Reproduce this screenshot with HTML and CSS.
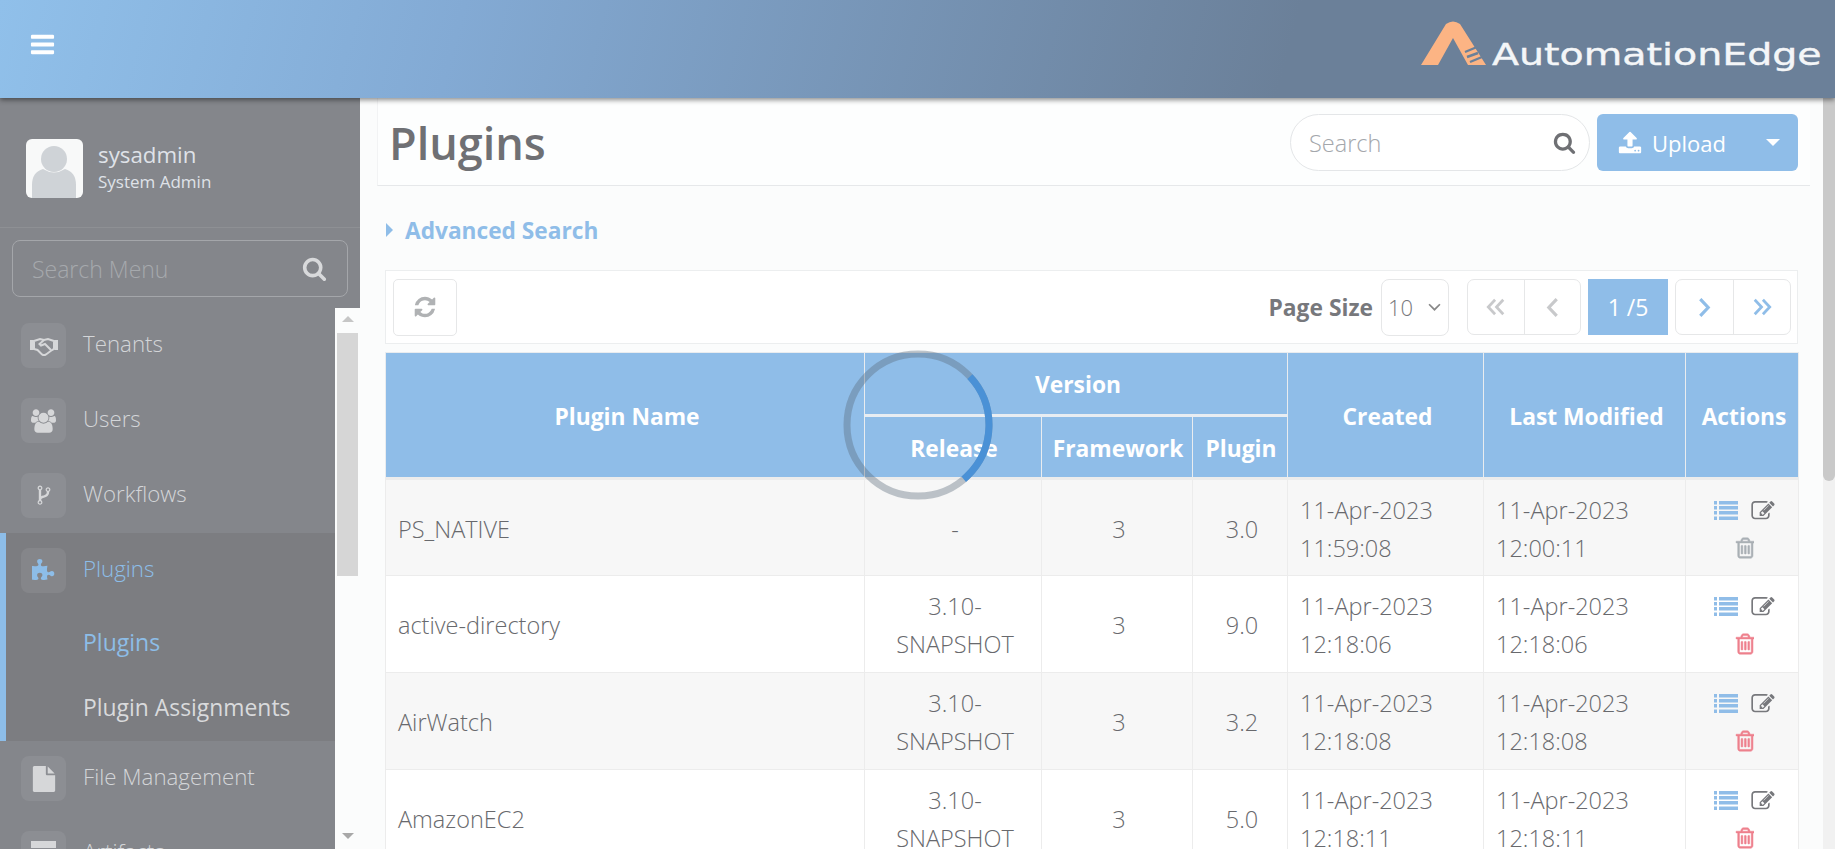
FILE: index.html
```html
<!DOCTYPE html>
<html lang="en">
<head>
    <meta charset="UTF-8">
    <meta name="viewport" content="width=device-width, initial-scale=1.0">
    <title>Plugins</title>
    <link rel="stylesheet" href="styles.css">
</head>
<body>
    <svg class="sprite" xmlns="http://www.w3.org/2000/svg">
        <symbol id="i-bars" viewBox="0 0 1792 1792"><path d="M1664 1344v128q0 26-19 45t-45 19h-1408q-26 0-45-19t-19-45v-128q0-26 19-45t45-19h1408q26 0 45 19t19 45zm0-512v128q0 26-19 45t-45 19h-1408q-26 0-45-19t-19-45v-128q0-26 19-45t45-19h1408q26 0 45 19t19 45zm0-512v128q0 26-19 45t-45 19h-1408q-26 0-45-19t-19-45v-128q0-26 19-45t45-19h1408q26 0 45 19t19 45z"/></symbol>
        <symbol id="i-search" viewBox="0 0 1792 1792"><path d="M1216 832q0-185-131.500-316.500t-316.500-131.500-316.500 131.500-131.500 316.500 131.500 316.500 316.500 131.500 316.500-131.500 131.500-316.500zm512 832q0 52-38 90t-90 38q-54 0-90-38l-343-342q-179 124-399 124-143 0-273.500-55.500t-225-150-150-225-55.500-273.500 55.500-273.500 150-225 225-150 273.500-55.500 273.500 55.500 225 150 150 225 55.500 273.500q0 220-124 399l343 343q37 37 37 90z"/></symbol>
        <symbol id="i-upload" viewBox="0 0 1792 1792"><path d="M1344 1472q0-26-19-45t-45-19-45 19-19 45 19 45 45 19 45-19 19-45zm256 0q0-26-19-45t-45-19-45 19-19 45 19 45 45 19 45-19 19-45zm128-224v320q0 40-28 68t-68 28h-1472q-40 0-68-28t-28-68v-320q0-40 28-68t68-28h427q21 56 70.500 92t110.500 36h256q61 0 110.500-36t70.500-92h427q40 0 68 28t28 68zm-325-648q-17 40-59 40h-256v448q0 26-19 45t-45 19h-256q-26 0-45-19t-19-45v-448h-256q-42 0-59-40-17-39 14-69l448-448q18-19 45-19t45 19l448 448q31 30 14 69z"/></symbol>
        <symbol id="i-refresh" viewBox="0 0 1792 1792"><path d="M1639 1056q0 5-1 7-64 268-268 434.500t-478 166.500q-146 0-282.500-55t-243.500-157l-129 129q-19 19-45 19t-45-19-19-45v-448q0-26 19-45t45-19h448q26 0 45 19t19 45-19 45l-137 137q71 66 161 102t187 36q134 0 250-65t186-179q11-17 53-117 8-23 30-23h192q13 0 22.500 9.500t9.500 22.500zm25-800v448q0 26-19 45t-45 19h-448q-26 0-45-19t-19-45 19-45l138-138q-148-137-349-137-134 0-250 65t-186 179q-11 17-53 117-8 23-30 23h-199q-13 0-22.500-9.500t-9.500-22.500v-7q65-268 270-434.500t480-166.500q146 0 284 55.500t245 156.500l130-129q19-19 45-19t45 19 19 45z"/></symbol>
        <symbol id="i-users" viewBox="0 0 1920 1792"><path d="M593 896q-162 5-265 128h-134q-82 0-138-40.500t-56-118.500q0-353 124-353 6 0 43.500 21t97.500 42.500 119 21.500q67 0 133-23-5 37-5 66 0 139 81 256zm1071 637q0 120-73 189.500t-194 69.500h-874q-121 0-194-69.500t-73-189.500q0-53 3.500-103.500t14-109 26.500-108.500 43-97.500 62-81 85.500-53.500 111.500-20q10 0 43 21.500t73 48 107 48 135 21.500 135-21.500 107-48 73-48 43-21.500q61 0 111.500 20t85.500 53.500 62 81 43 97.500 26.500 108.500 14 109 3.500 103.500zm-1024-1277q0 106-75 181t-181 75-181-75-75-181 75-181 181-75 181 75 75 181zm704 384q0 159-112.500 271.500t-271.500 112.500-271.500-112.500-112.500-271.500 112.500-271.500 271.500-112.500 271.500 112.500 112.500 271.500zm576 225q0 78-56 118.500t-138 40.500h-134q-103-123-265-128 81-117 81-256 0-29-5-66 66 23 133 23 59 0 119-21.500t97.500-42.500 43.500-21q124 0 124 353zm-128-609q0 106-75 181t-181 75-181-75-75-181 75-181 181-75 181 75 75 181z"/></symbol>
        <symbol id="i-puzzle" viewBox="0 0 1792 1792"><path d="M1664 1098q0 81-44.500 135t-123.500 54q-41 0-77.500-17.500t-59-38-56.500-38-71-17.500q-110 0-110 124 0 39 16 115t15 115v5q-22 0-33 1-34 3-97.500 11.500t-115.500 13.500-98 5q-61 0-103-26.500t-42-83.500q0-37 17.500-71t38-56.500 38-59 17.500-77.500q0-79-54-123.500t-135-44.500q-84 0-143 45.500t-59 127.500q0 43 15 83t33.500 64.500 33.500 53 15 50.500q0 45-46 89-37 35-117 35-95 0-245-24-9-2-27.500-4t-27.500-4l-13-2q-1 0-3-1-2 0-2-1v-1024q2 1 17.500 3.500t34 5 21.500 3.500q150 24 245 24 80 0 117-35 46-44 46-89 0-22-15-50.500t-33.500-53-33.500-64.500-15-83q0-82 59-127.500t144-45.500q80 0 134 44.500t54 123.500q0 41-17.500 77.500t-38 59-38 56.500-17.500 71q0 57 42 83.500t103 26.500q64 0 180-15t163-17v2q-1 2-3.500 17.500t-5 34-3.500 21.500q-24 150-24 245 0 80 35 117 44 46 89 46 22 0 50.500-15t53-33.500 64.500-33.500 83-15q82 0 127.500 59t45.500 143z"/></symbol>
        <symbol id="i-file" viewBox="0 0 1792 1792"><path d="M1152 512v-472q22 14 36 28l408 408q14 14 28 36h-472zm-128 32q0 40 28 68t68 28h544v1056q0 40-28 68t-68 28h-1344q-40 0-68-28t-28-68v-1600q0-40 28-68t68-28h800v544z"/></symbol>
        <symbol id="i-fork" viewBox="0 0 1280 1792"><path d="M416 1408q0-40-28-68t-68-28-68 28-28 68 28 68 68 28 68-28 28-68zm0-1152q0-40-28-68t-68-28-68 28-28 68 28 68 68 28 68-28 28-68zm640 128q0-40-28-68t-68-28-68 28-28 68 28 68 68 28 68-28 28-68zm96 0q0 52-26 96.500t-70 69.500q-2 287-226 414-67 38-203 81-128 40-169.500 71t-41.500 100v26q44 25 70 69.500t26 96.500q0 80-56 136t-136 56-136-56-56-136q0-52 26-96.500t70-69.500v-820q-44-25-70-69.500t-26-96.500q0-80 56-136t136-56 136 56 56 136q0 52-26 96.500t-70 69.500v497q54-26 154-57 55-17 87.500-29.500t70.500-31 59-39.500 40.500-51 28-69.500 8.500-91.500q-44-25-70-69.500t-26-96.500q0-80 56-136t136-56 136 56 56 136z"/></symbol>
        <symbol id="i-handshake" viewBox="0 0 28 20"><path d="M0 4h3.500v10H0zM24.500 4H28v10h-3.500z"/><path d="M4 5l6-2 4 1 4-1 6 2v8l-2 1-6 4.500-2 1-2-1-4.500-4.500L4 13z" fill="none" stroke="currentColor" stroke-width="2"/><path d="M14 4l-4.500 4 1.500 1.500L15 8l6 6" fill="none" stroke="currentColor" stroke-width="2"/></symbol>
        <symbol id="i-list" viewBox="0 0 24 19"><path d="M0 0h3v3.500H0zM5 0h19v3.500H5zM0 5h3v3.500H0zM5 5h19v3.500H5zM0 10h3v3.500H0zM5 10h19v3.500H5zM0 15.500h3V19H0zM5 15.500h19V19H5z"/></symbol>
        <symbol id="i-edit" viewBox="0 0 1792 1536"><path transform="translate(0 -128)" d="M888 1184l116-116-152-152-116 116v56h96v96h56zm440-720q-16-16-33 1l-350 350q-17 17-1 33t33-1l350-350q17-17 1-33zm80 594v190q0 119-84.500 203.500t-203.500 84.500h-832q-119 0-203.500-84.500t-84.500-203.500v-832q0-119 84.500-203.500t203.500-84.500h832q63 0 117 25 15 7 18 23 3 17-9 29l-49 49q-14 14-32 8-23-6-45-6h-832q-66 0-113 47t-47 113v832q0 66 47 113t113 47h832q66 0 113-47t47-113v-126q0-13 9-22l64-64q15-15 35-7t20 29zm-96-738l288 288-672 672h-288v-288zm444 132l-92 92-288-288 92-92q28-28 68-28t68 28l152 152q28 28 28 68t-28 68z"/></symbol>
        <symbol id="i-trash" viewBox="128 64 1408 1664"><path d="M704 736v576q0 14-9 23t-23 9h-64q-14 0-23-9t-9-23v-576q0-14 9-23t23-9h64q14 0 23 9t9 23zm256 0v576q0 14-9 23t-23 9h-64q-14 0-23-9t-9-23v-576q0-14 9-23t23-9h64q14 0 23 9t9 23zm256 0v576q0 14-9 23t-23 9h-64q-14 0-23-9t-9-23v-576q0-14 9-23t23-9h64q14 0 23 9t9 23zm128 724v-948h-896v948q0 22 7 40.500t14.500 27 10.500 8.500h832q3 0 10.500-8.500t14.500-27 7-40.500zm-672-1076h448l-48-117q-7-9-17-11h-317q-10 2-17 11zm928 32v64q0 14-9 23t-23 9h-96v948q0 83-47 143.500t-113 60.500h-832q-66 0-113-58.500t-47-141.500v-952h-96q-14 0-23-9t-9-23v-64q0-14 9-23t23-9h309l70-167q15-37 54-63t79-26h320q40 0 79 26t54 63l70 167h309q14 0 23 9t9 23z"/></symbol>
        <symbol id="i-dleft" viewBox="0 0 22 18"><path d="M10 1L2.500 9l7.500 8M19 1l-7.500 8 7.500 8" fill="none" stroke="currentColor" stroke-width="3"/></symbol>
        <symbol id="i-left" viewBox="0 0 12 18"><path d="M10 1L2.500 9l7.500 8" fill="none" stroke="currentColor" stroke-width="3"/></symbol>
        <symbol id="i-right" viewBox="0 0 12 18"><path d="M2 1l7.500 8L2 17" fill="none" stroke="currentColor" stroke-width="3"/></symbol>
        <symbol id="i-dright" viewBox="0 0 22 18"><path d="M3 1l7.500 8L3 17M12 1l7.500 8-7.500 8" fill="none" stroke="currentColor" stroke-width="3"/></symbol>
    </svg>

    <header class="topbar">
        <svg class="menu-icon"><use href="#i-bars"/></svg>
        <div class="logo">
            <svg class="logo-mark" viewBox="0 0 65 46">
                <path d="M0 45L25 4Q32 -1 39 4L65 45H47L32 18L17 45Z" fill="#fcb484"/>
                <path d="M44 32L56 27M46 37L57 33M49 42L61 37" fill="none" stroke="#6b8099" stroke-width="2.400"/>
            </svg>
            <span class="logo-text">AutomationEdge</span>
        </div>
    </header>

    <div class="layout">
        <aside class="sidebar">
            <div class="user-panel">
                <div class="avatar">
                    <svg viewBox="0 0 57 59">
                        <circle cx="28" cy="20" r="13" fill="#cfd3d7"/>
                        <path d="M6 59V46Q6 33 17 30Q28 37 39 30Q50 33 50 46V59Z" fill="#cfd3d7"/>
                    </svg>
                </div>
                <div>
                    <div class="user-name">sysadmin</div>
                    <div class="user-role">System Admin</div>
                </div>
            </div>
            <div class="menu-search">
                <span>Search Menu</span>
                <svg class="menu-search-icon"><use href="#i-search"/></svg>
            </div>
            <div class="nav-wrap">
                <nav class="nav">
                    <a class="nav-item"><span class="nav-icon"><svg class="ic-hand"><use href="#i-handshake"/></svg></span><span class="nav-label">Tenants</span></a>
                    <a class="nav-item"><span class="nav-icon"><svg class="ic-users"><use href="#i-users"/></svg></span><span class="nav-label">Users</span></a>
                    <a class="nav-item"><span class="nav-icon"><svg class="ic-fork"><use href="#i-fork"/></svg></span><span class="nav-label">Workflows</span></a>
                    <div class="nav-group">
                        <a class="nav-item active"><span class="nav-icon"><svg class="ic-puzzle"><use href="#i-puzzle"/></svg></span><span class="nav-label">Plugins</span></a>
                        <a class="nav-sub current">Plugins</a>
                        <a class="nav-sub">Plugin Assignments</a>
                    </div>
                    <a class="nav-item"><span class="nav-icon"><svg class="ic-file"><use href="#i-file"/></svg></span><span class="nav-label">File Management</span></a>
                    <a class="nav-item"><span class="nav-icon"><span class="ic-archive"></span></span><span class="nav-label">Artifacts</span></a>
                </nav>
                <div class="nav-scroll">
                    <span class="arrow-up"></span>
                    <div class="nav-thumb"></div>
                    <span class="arrow-down"></span>
                </div>
            </div>
        </aside>

        <main class="content">
            <div class="page-head">
                <h1>Plugins</h1>
                <div class="head-tools">
                    <div class="search-box">
                        <span>Search</span>
                        <svg class="search-icon"><use href="#i-search"/></svg>
                    </div>
                    <button class="upload-btn">
                        <svg class="upload-icon"><use href="#i-upload"/></svg>
                        <span>Upload</span>
                        <i class="caret"></i>
                    </button>
                </div>
            </div>

            <div class="adv-search"><i class="caret-right"></i>Advanced Search</div>

            <div class="toolbar">
                <button class="refresh-btn"><svg><use href="#i-refresh"/></svg></button>
                <div class="pager">
                    <b class="size-label">Page Size</b>
                    <div class="size-select">10
                        <svg viewBox="0 0 12 8"><path d="M1 1l5 5 5-5" fill="none" stroke="#888" stroke-width="1.600"/></svg>
                    </div>
                    <div class="page-group">
                        <span class="page-btn off"><svg class="ic-double"><use href="#i-dleft"/></svg></span>
                        <span class="page-btn off"><svg class="ic-single"><use href="#i-left"/></svg></span>
                    </div>
                    <div class="page-now">1 /5</div>
                    <div class="page-group next">
                        <span class="page-btn"><svg class="ic-single"><use href="#i-right"/></svg></span>
                        <span class="page-btn"><svg class="ic-double"><use href="#i-dright"/></svg></span>
                    </div>
                </div>
            </div>

            <table class="grid">
                <colgroup>
                    <col class="c-name"><col class="c-release"><col class="c-frame"><col class="c-plugin">
                    <col class="c-created"><col class="c-modified"><col class="c-actions">
                </colgroup>
                <thead>
                    <tr>
                        <th rowspan="2">Plugin Name</th>
                        <th colspan="3" class="th-group">Version</th>
                        <th rowspan="2">Created</th>
                        <th rowspan="2">Last Modified</th>
                        <th rowspan="2">Actions</th>
                    </tr>
                    <tr class="th-sub">
                        <th>Release</th>
                        <th>Framework</th>
                        <th>Plugin</th>
                    </tr>
                </thead>
                <tbody>
                    <tr>
                        <td class="name">PS_NATIVE</td><td>-</td><td>3</td><td>3.0</td>
                        <td class="date">11-Apr-2023<br>11:59:08</td><td class="date">11-Apr-2023<br>12:00:11</td>
                        <td class="acts">
                            <svg class="a-list"><use href="#i-list"/></svg><svg class="a-edit"><use href="#i-edit"/></svg><br>
                            <svg class="a-trash off"><use href="#i-trash"/></svg>
                        </td>
                    </tr>
                    <tr>
                        <td class="name">active-directory</td><td>3.10-<br>SNAPSHOT</td><td>3</td><td>9.0</td>
                        <td class="date">11-Apr-2023<br>12:18:06</td><td class="date">11-Apr-2023<br>12:18:06</td>
                        <td class="acts">
                            <svg class="a-list"><use href="#i-list"/></svg><svg class="a-edit"><use href="#i-edit"/></svg><br>
                            <svg class="a-trash"><use href="#i-trash"/></svg>
                        </td>
                    </tr>
                    <tr>
                        <td class="name">AirWatch</td><td>3.10-<br>SNAPSHOT</td><td>3</td><td>3.2</td>
                        <td class="date">11-Apr-2023<br>12:18:08</td><td class="date">11-Apr-2023<br>12:18:08</td>
                        <td class="acts">
                            <svg class="a-list"><use href="#i-list"/></svg><svg class="a-edit"><use href="#i-edit"/></svg><br>
                            <svg class="a-trash"><use href="#i-trash"/></svg>
                        </td>
                    </tr>
                    <tr>
                        <td class="name">AmazonEC2</td><td>3.10-<br>SNAPSHOT</td><td>3</td><td>5.0</td>
                        <td class="date">11-Apr-2023<br>12:18:11</td><td class="date">11-Apr-2023<br>12:18:11</td>
                        <td class="acts">
                            <svg class="a-list"><use href="#i-list"/></svg><svg class="a-edit"><use href="#i-edit"/></svg><br>
                            <svg class="a-trash"><use href="#i-trash"/></svg>
                        </td>
                    </tr>
                </tbody>
            </table>
        </main>

        <div class="page-scroll"><div class="page-thumb"></div></div>
    </div>

    <svg class="spinner" viewBox="0 0 150 150">
        <circle cx="75" cy="75" r="71" fill="none" stroke="rgba(90,105,120,.38)" stroke-width="7"/>
        <circle cx="75" cy="75" r="71" fill="none" stroke="#4a91d6" stroke-width="7" stroke-dasharray="115 331" transform="rotate(-43 75 75)"/>
    </svg>
</body>
</html>
```

FILE: styles.css
```css
* { box-sizing: border-box; }
html, body { height: 100%; }
body { margin: 0; height: 849px; overflow: hidden; font-family: "Open Sans", "Noto Sans", sans-serif; color: #77787c; background: #fbfcfc; display: flex; flex-direction: column; }
.sprite { display: none; }
svg { fill: currentColor; }

/* top bar */
.topbar { height: 98px; flex: none; display: flex; align-items: center; justify-content: space-between; padding: 0 16px 10px 29px; background: linear-gradient(105deg, #90c0ea 0%, #83aad4 25%, #6b8099 70%, #6b8099 100%); box-shadow: 0 2px 5px rgba(0,0,0,.45); position: relative; z-index: 2; }
.menu-icon { width: 27px; height: 27px; color: #fff; }
.logo { display: flex; align-items: flex-end; gap: 6px; margin-top: -2px; }
.logo-mark { width: 65px; height: 46px; }
.logo-text { width: 327px; color: #f4f6f8; font-family: "DejaVu Sans", sans-serif; font-size: 31px; line-height: 32px; white-space: nowrap; -webkit-text-stroke: .4px #f4f6f8; transform-origin: left bottom; transform: scaleX(1.275); margin-bottom: -4px; }

.layout { flex: 1; display: flex; min-height: 0; }

/* sidebar */
.sidebar { width: 360px; flex: none; background: #84868b; display: flex; flex-direction: column; overflow: hidden; }
.user-panel { height: 130px; flex: none; display: flex; align-items: center; gap: 15px; padding: 11px 0 0 26px; margin-bottom: 12px; border-bottom: 1px solid #8e9094; }
.avatar { width: 57px; height: 59px; background: #f8f9f9; border-radius: 6px; overflow: hidden; }
.avatar svg { display: block; width: 57px; height: 59px; }
.user-name { color: #dfe2e8; font-size: 22.300px; line-height: 27px; }
.user-role { color: #dfe2e8; font-size: 17px; line-height: 27px; }
.menu-search { height: 57px; flex: none; margin: 0 12px; border: 1px solid #a4a6aa; border-radius: 8px; display: flex; align-items: center; justify-content: space-between; padding: 0 20px 0 19px; color: #a6a9ad; font-size: 23px; font-weight: 300; }
.menu-search-icon { width: 25px; height: 25px; color: #d8d9db; }
.nav-wrap { flex: 1; min-height: 0; display: flex; margin-top: 11px; }
.nav { width: 335px; flex: none; overflow: hidden; }
.nav-item { height: 75px; display: flex; align-items: center; gap: 17px; padding-left: 21px; color: #d3d5d8; font-size: 22.300px; font-weight: 300; }
.nav-label { margin-bottom: 4px; }
.nav-icon { width: 45px; height: 45px; flex: none; border-radius: 8px; background: #8c8e93; display: flex; align-items: center; justify-content: center; color: #d6d7d9; }
.nav-group { background: #7c7d81; box-shadow: inset 6px 0 0 #8dbde8; height: 208px; }
.nav-item.active { color: #8dbde8; }
.nav-item.active .nav-icon { color: #8dbde8; background: #85868a; }
.nav-sub { display: block; height: 66.500px; padding-left: 83px; color: #d9dadc; font-size: 22.900px; font-weight: 500; line-height: 66px; }
.nav-sub.current { color: #8dbde8; font-size: 23px; font-weight: 400; line-height: 68px; }
.ic-hand { width: 28px; height: 20px; }
.ic-users { width: 25px; height: 24px; }
.ic-fork { width: 16px; height: 24px; }
.ic-puzzle { width: 24px; height: 24px; }
.ic-file { width: 26px; height: 26px; }
.ic-archive { display: block; width: 25px; height: 26px; background: linear-gradient(#d6d7d9 0 7px, transparent 7px 9px, #d6d7d9 9px); }
.nav-scroll { width: 25px; flex: none; background: #fbfcfc; display: flex; flex-direction: column; align-items: center; justify-content: space-between; padding: 8px 0 10px; position: relative; }
.nav-thumb { position: absolute; top: 25px; left: 2px; width: 21px; height: 243px; background: #d6d6d6; }
.arrow-up { width: 0; height: 0; border: 6px solid transparent; border-top: 0; border-bottom: 6px solid #c6c6c6; }
.arrow-down { width: 0; height: 0; border: 6px solid transparent; border-bottom: 0; border-top: 6px solid #a8a8a8; }

/* main */
.content { flex: 1; min-width: 0; padding: 0 13px 0 17px; overflow: hidden; }
.page-head { height: 88px; display: flex; align-items: center; justify-content: space-between; padding: 2px 12px 0 11px; background: #fdfefe; border-bottom: 1px solid #e6e8ea; border-left: 1px solid #f2f3f4; }
h1 { margin: 0; font-size: 45px; font-weight: 600; color: #6f7074; }
.head-tools { display: flex; gap: 7px; align-items: center; }
.search-box { width: 300px; height: 57px; background: #fff; border: 1px solid #e4e6e8; border-radius: 29px; display: flex; align-items: center; justify-content: space-between; padding: 0 13px 0 18px; color: #a4a7ac; font-size: 23.500px; font-weight: 300; }
.search-icon { width: 23px; height: 23px; color: #6f7074; }
.upload-btn { width: 201px; height: 57px; background: #8fbde8; border: 0; border-radius: 6px; color: #fff; font: 400 22px "Open Sans", sans-serif; display: flex; align-items: center; padding: 0 18px 0 21px; }
.upload-icon { width: 24px; height: 24px; margin-right: 10px; }
.caret { margin-left: auto; width: 0; height: 0; border: 7px solid transparent; border-bottom: 0; border-top: 7px solid #fff; }
.adv-search { height: 84px; margin-left: 9px; padding-top: 4px; display: flex; align-items: center; gap: 12px; color: #8fbde8; font-size: 22.700px; font-weight: 700; }
.caret-right { width: 0; height: 0; border: 7px solid transparent; border-right: 0; border-left: 7px solid #8fbde8; }

.toolbar { margin: 0 12px 0 8px; height: 74px; background: #fff; border: 1px solid #eceeef; display: flex; align-items: center; justify-content: space-between; padding: 0 6px 0 7px; }
.refresh-btn { width: 64px; height: 57px; background: #fff; border: 1px solid #e6e7e8; border-radius: 5px; color: #b0b2b4; display: flex; align-items: center; justify-content: center; padding: 0; }
.refresh-btn svg { width: 24px; height: 24px; }
.pager { display: flex; align-items: center; }
.size-label { font-size: 22.800px; font-weight: 700; color: #77787c; margin-right: 8px; }
.size-select { width: 68px; height: 57px; border: 1px solid #e6e7e8; border-radius: 8px; display: flex; align-items: center; justify-content: space-between; padding: 0 7px 0 6px; font-size: 22px; font-weight: 300; margin-right: 18px; }
.size-select svg { width: 13px; height: 9px; }
.page-group { display: flex; width: 114px; height: 56px; border: 1px solid #e6e7e8; border-radius: 7px; }
.page-group.next { width: 116px; }
.page-btn { flex: 1; display: flex; align-items: center; justify-content: center; color: #8fbde8; }
.page-btn + .page-btn { border-left: 1px solid #e6e7e8; }
.page-btn.off { color: #c8c9cb; }
.ic-double { width: 20px; height: 18px; }
.ic-single { width: 13px; height: 19px; }
.page-now { width: 80px; height: 56px; margin: 0 7px; background: #8fbde8; color: #fff; display: flex; align-items: center; justify-content: center; font-size: 23px; font-weight: 400; }

/* table */
.grid { margin: 8px 0 0 8px; width: 1413px; border-collapse: collapse; table-layout: fixed; font-size: 23.500px; }
.c-name { width: 479px; }
.c-release { width: 177px; }
.c-frame { width: 151px; }
.c-plugin { width: 95px; }
.c-created { width: 196px; }
.c-modified { width: 202px; }
.c-actions { width: 113px; }
.grid th { background: #8fbde8; color: #fff; font-size: 22.800px; font-weight: 700; border: 1px solid #e9ecef; border-bottom: 3px solid #ececec; padding: 2px 0 0 4px; text-align: center; }
.grid thead tr { height: 63px; }
.grid .th-sub th { padding-left: 2px; }
.grid th.th-group { border-bottom: 3px solid #e8edf2; }
.grid td { height: 97px; border: 1px solid #ececec; text-align: center; line-height: 38px; padding: 2px 0 0 4px; font-weight: 300; color: #68696d; background: #fff; }
.grid tbody tr:nth-child(odd) td { background: #f7f7f7; }
.grid td.name { text-align: left; padding-left: 12px; }
.grid td.date { text-align: left; padding-left: 12px; }
.grid td.acts { line-height: 0; padding: 4px 0 0 5px; }
.acts svg { display: inline-block; vertical-align: top; }
.a-list { width: 24px; height: 19px; color: #90bde8; margin: 0 13px 16px 0; }
.a-edit { width: 24px; height: 20px; color: #77787c; margin-bottom: 16px; }
.a-trash { width: 19px; height: 22px; color: #ee808d; stroke: currentColor; stroke-width: 40px; }
.a-trash.off { color: #aab0b5; }

.page-scroll { width: 12px; flex: none; background: #f1f1f1; }
.page-thumb { height: 383px; background: #c9c9c9; border-radius: 0 0 6px 6px; }

/* loading ring sits over the page */
.spinner { position: absolute; left: 843px; top: 350px; width: 150px; height: 150px; }
```
